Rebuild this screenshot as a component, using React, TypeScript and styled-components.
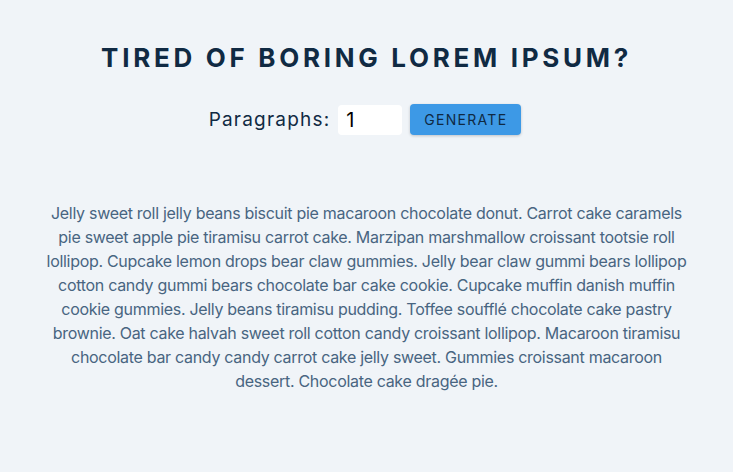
import React, { useState } from "react";
import styled, { createGlobalStyle } from "styled-components";

const Global = createGlobalStyle`
  * { box-sizing: border-box; margin: 0; padding: 0; }
  body {
    background: #f0f4f8;
    font-family: Inter, "Noto Sans", sans-serif;
    color: #102a43;
  }
`;

const Section = styled.section`
  width: 90vw;
  max-width: 640px;
  margin: 0 auto;
  padding-top: 42px;
  text-align: center;
`;

const Title = styled.h3`
  font-size: 26px;
  font-weight: 700;
  letter-spacing: 3.7px;
  text-transform: uppercase;
  color: #102a43;
  line-height: 32px;
`;

const Form = styled.form`
  display: flex;
  justify-content: center;
  align-items: center;
  margin-top: 30px;
  margin-bottom: 62px;
  padding-right: 3px;
`;

const Label = styled.label`
  font-size: 19px;
  letter-spacing: 1.2px;
  color: #102a43;
  margin-right: 8px;
`;

const Input = styled.input`
  width: 64px;
  height: 30px;
  border: none;
  border-radius: 4px;
  background: #fff;
  padding: 0 8px;
  font-family: inherit;
  font-size: 20px;
  color: #000;
  margin-right: 8px;
  outline: none;
`;

const Button = styled.button`
  width: 111px;
  height: 31px;
  border: none;
  border-radius: 4px;
  background: #3d99e6;
  color: #102a43;
  font-family: inherit;
  font-size: 14px;
  letter-spacing: 1.3px;
  text-transform: uppercase;
  box-shadow: 0 1px 3px rgba(0, 0, 0, 0.2);
  cursor: pointer;
`;

const Article = styled.article`
  padding-top: 4px;
`;

const Para = styled.p`
  font-size: 16px;
  line-height: 24px;
  letter-spacing: -0.3px;
  color: #486581;
`;

const text =
  "Jelly sweet roll jelly beans biscuit pie macaroon chocolate donut. Carrot cake caramels pie sweet apple pie tiramisu carrot cake. Marzipan marshmallow croissant tootsie roll lollipop. Cupcake lemon drops bear claw gummies. Jelly bear claw gummi bears lollipop cotton candy gummi bears chocolate bar cake cookie. Cupcake muffin danish muffin cookie gummies. Jelly beans tiramisu pudding. Toffee soufflé chocolate cake pastry brownie. Oat cake halvah sweet roll cotton candy croissant lollipop. Macaroon tiramisu chocolate bar candy candy carrot cake jelly sweet. Gummies croissant macaroon dessert. Chocolate cake dragée pie.";

export default function App() {
  const [count, setCount] = useState("1");
  return (
    <>
      <Global />
      <Section>
        <Title>Tired of boring lorem ipsum?</Title>
        <Form onSubmit={(e) => e.preventDefault()}>
          <Label htmlFor="amount">Paragraphs:</Label>
          <Input
            type="text"
            id="amount"
            value={count}
            onChange={(e) => setCount(e.target.value)}
          />
          <Button type="submit">Generate</Button>
        </Form>
        <Article>
          <Para>{text}</Para>
        </Article>
      </Section>
    </>
  );
}
